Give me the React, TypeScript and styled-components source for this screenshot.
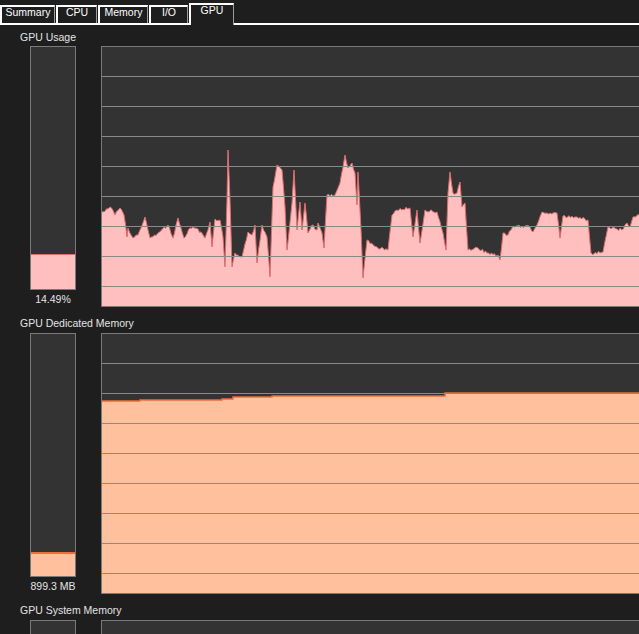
import React from "react";
import styled, { createGlobalStyle } from "styled-components";

// graph samples in page pixels (x, y), converted to chart space below
const usageSamples: [number, number][] = [
  [102, 212], [110, 207], [115, 215], [120, 208], [124, 215], [127, 237],
  [128, 228], [133, 238], [138, 235], [145, 217], [150, 238], [158, 233],
  [168, 225], [173, 238], [178, 218], [184, 238], [190, 228], [198, 229],
  [205, 238], [210, 222], [212, 247], [215, 219], [220, 220], [223, 237],
  [225, 267], [227, 200], [228, 150], [230, 200], [232, 267], [235, 253],
  [242, 257], [248, 232], [252, 235], [255, 225], [257, 263], [262, 225],
  [267, 237], [270, 277], [273, 187], [277, 165], [282, 170], [285, 207],
  [287, 250], [292, 203], [294, 170], [297, 230], [300, 202], [302, 230],
  [305, 203], [308, 233], [312, 225], [317, 230], [318, 223], [322, 233],
  [324, 248], [327, 195], [335, 195], [340, 183], [345, 155], [348, 168],
  [352, 163], [355, 173], [357, 205], [358, 172], [361, 230], [363, 278],
  [367, 240], [377, 247], [388, 250], [392, 215], [397, 210], [410, 208],
  [413, 237], [417, 210], [420, 243], [425, 210], [437, 212], [443, 233],
  [446, 250], [448, 193], [450, 172], [453, 193], [457, 193], [460, 182],
  [462, 207], [465, 203], [468, 250], [478, 248], [487, 253], [498, 255],
  [500, 260], [503, 233], [508, 235], [513, 226], [530, 227], [533, 232],
  [537, 225], [542, 212], [547, 213], [557, 213], [560, 238], [563, 216],
  [577, 217], [588, 220], [591, 253], [603, 252], [608, 227], [622, 230],
  [627, 223], [630, 227], [633, 217], [639, 215], [662, 214],
];

const memorySamples: [number, number][] = [
  [102, 401], [140, 401], [140, 400], [222, 400], [222, 399], [233, 399],
  [233, 397], [272, 397], [272, 396], [445, 396], [445, 393], [662, 393],
];

const CHART_W = 560;
const CHART_H = 259;
const ORIGIN_X = 102;

type Series = {
  title: string;
  value: string;
  meter: number;
  fill: string;
  edge: string;
  edgeWidth: number;
  originY: number;
  jitter: number;
  samples: [number, number][];
};

const sections: Series[] = [
  {
    title: "GPU Usage",
    value: "14.49%",
    meter: 14.49,
    fill: "#ffbfbf",
    edge: "#e06c6c",
    edgeWidth: 1,
    originY: 47,
    jitter: 3,
    samples: usageSamples,
  },
  {
    title: "GPU Dedicated Memory",
    value: "899.3 MB",
    meter: 10,
    fill: "#ffc09e",
    edge: "#ec6f38",
    edgeWidth: 2,
    originY: 334,
    jitter: 0,
    samples: memorySamples,
  },
  {
    title: "GPU System Memory",
    value: "",
    meter: 0,
    fill: "#ffc09e",
    edge: "#ec6f38",
    edgeWidth: 2,
    originY: 621,
    jitter: 0,
    samples: [],
  },
];

const tabs = [
  { name: "Summary", width: 55 },
  { name: "CPU", width: 41 },
  { name: "Memory", width: 50 },
  { name: "I/O", width: 39 },
  { name: "GPU", width: 45 },
];

// small repeatable noise so the usage line gets its ragged look
const noise = (n: number) => {
  const s = Math.sin(n * 12.9898) * 43758.5453;
  return s - Math.floor(s) - 0.5;
};

const densify = (samples: [number, number][], jitter: number) => {
  if (!jitter) return samples;
  const out: [number, number][] = [];
  samples.forEach(([x, y], i) => {
    out.push([x, y]);
    const next = samples[i + 1];
    if (!next || next[0] - x < 3) return;
    for (let px = x + 1.5; px < next[0] - 1; px += 1.5) {
      const t = (px - x) / (next[0] - x);
      out.push([px, y + (next[1] - y) * t + noise(px) * jitter]);
    }
  });
  return out;
};

const HistoryChart = ({ series }: { series: Series }) => {
  const samples = densify(series.samples, series.jitter);
  const pts = samples.map(
    ([x, y]) => `${(x - ORIGIN_X).toFixed(1)},${(y - series.originY).toFixed(1)}`
  );
  const last = samples[samples.length - 1];
  const grid = Array.from({ length: 8 }, (_, i) => 29.5 + i * 30);

  return (
    <svg width={CHART_W} height={CHART_H} viewBox={`0 0 ${CHART_W} ${CHART_H}`}>
      {pts.length > 0 && (
        <>
          <polygon
            points={`0,${CHART_H} ${pts.join(" ")} ${last[0] - ORIGIN_X},${CHART_H}`}
            fill={series.fill}
          />
          <polyline
            points={pts.join(" ")}
            fill="none"
            stroke={series.edge}
            strokeWidth={series.edgeWidth === 2 ? 1.5 : 1}
          />
        </>
      )}
      {grid.map((y) => (
        <line key={y} x1={0} x2={CHART_W} y1={y} y2={y} stroke="#8a8a8a" strokeWidth={1} />
      ))}
    </svg>
  );
};

export default function App() {
  return (
    <>
      <GlobalStyle />
      <Window>
        <TabStrip>
          {tabs.map((t) => (
            <Tab key={t.name} $w={t.width} $active={t.name === "GPU"}>
              {t.name}
            </Tab>
          ))}
        </TabStrip>
        <Panel>
          {sections.map((s) => (
            <Section key={s.title}>
              <SectionTitle>{s.title}</SectionTitle>
              <SectionRow>
                <MeterColumn>
                  <Meter>
                    {s.meter > 0 && (
                      <MeterFill
                        $fill={s.fill}
                        $edge={s.edge}
                        $edgeWidth={s.edgeWidth}
                        style={{ height: `${s.meter}%` }}
                      />
                    )}
                  </Meter>
                  <MeterValue>{s.value}</MeterValue>
                </MeterColumn>
                <Chart>
                  <HistoryChart series={s} />
                </Chart>
              </SectionRow>
            </Section>
          ))}
        </Panel>
      </Window>
    </>
  );
}

const GlobalStyle = createGlobalStyle`
  html, body {
    margin: 0;
    background: #1e1e1e;
    overflow: hidden;
  }
  body {
    font-family: "Liberation Sans", Arial, sans-serif;
    font-size: 10.5px;
    color: #e6e6e6;
  }
`;

const Window = styled.div`
  width: 639px;
  height: 634px;
  overflow: hidden;
  background: #1e1e1e;
`;

const TabStrip = styled.div`
  display: flex;
  align-items: flex-end;
  height: 25px;
  box-sizing: border-box;
  box-shadow: inset 0 -2px #ffffff;
`;

const Tab = styled.div<{ $w: number; $active?: boolean }>`
  box-sizing: border-box;
  width: ${({ $w }) => $w}px;
  height: ${({ $active }) => ($active ? 22 : 18)}px;
  margin-bottom: ${({ $active }) => ($active ? 0 : 2)}px;
  margin-right: 1px;
  border-top: 2px solid #ffffff;
  border-left: 2px solid #ffffff;
  border-right: 1px solid #9c9c9c;
  background: #1e1e1e;
  color: #ffffff;
  text-align: center;
  line-height: 9px;
  padding-top: 1px;
`;

const Panel = styled.div`
  padding: 5px 0 0 20px;
`;

const SectionTitle = styled.div`
  height: 14px;
  line-height: 14px;
  margin-bottom: 2px;
  color: #e4e4e4;
`;

const Section = styled.section`
  & + & {
    margin-top: 9px;
  }

  & + & ${SectionTitle} {
    margin-bottom: 3px;
  }
`;

const SectionRow = styled.div`
  display: flex;
  gap: 25px;
  padding-left: 10px;
  height: 261px;
`;

const MeterColumn = styled.div`
  display: flex;
  flex-direction: column;
  width: 46px;
  flex: none;
`;

const Meter = styled.div`
  box-sizing: border-box;
  height: 246px;
  border: 1px solid #7a7a7a;
  background: #333333;
  display: flex;
  flex-direction: column;
  justify-content: flex-end;
`;

const MeterFill = styled.div<{ $fill: string; $edge: string; $edgeWidth: number }>`
  box-sizing: border-box;
  background: ${({ $fill }) => $fill};
  border-top: ${({ $edgeWidth }) => $edgeWidth}px solid ${({ $edge }) => $edge};
`;

const MeterValue = styled.div`
  padding-top: 2px;
  text-align: center;
  line-height: 15px;
  white-space: nowrap;
  color: #e4e4e4;
`;

const Chart = styled.div`
  flex: none;
  width: ${CHART_W}px;
  height: ${CHART_H}px;
  border: 1px solid #7a7a7a;
  background: #333333;

  & > svg {
    display: block;
  }
`;
